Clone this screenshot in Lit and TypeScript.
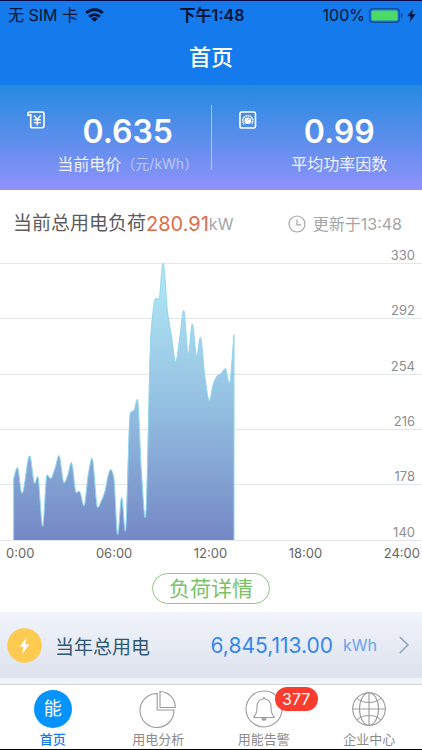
import { LitElement, html, svg, css } from "lit";
import { customElement, property } from "lit/decorators.js";
import { classMap } from "lit/directives/class-map.js";

// Load curve in plot units: x runs 0-1266 across the day, y runs 0 (330 kW) to 829 (140 kW).
const LOAD: [number, number][] = [
  [41, 645], [52, 612], [66, 690], [89, 577], [104, 660], [113, 639], [128, 788],
  [141, 634], [152, 645], [165, 615], [177, 576], [192, 658], [203, 636], [214, 597],
  [229, 687], [238, 683], [252, 727], [265, 632], [276, 584], [293, 732], [303, 714],
  [315, 683], [324, 638], [332, 618], [341, 640], [353, 813], [365, 702], [376, 803],
  [391, 448], [402, 441], [412, 408], [424, 620], [436, 763], [453, 210], [467, 106],
  [477, 108], [489, 0], [503, 150], [515, 222], [527, 296], [539, 226], [551, 142],
  [565, 273], [577, 182], [590, 280], [601, 222], [615, 343], [628, 412], [640, 362],
  [652, 337], [663, 331], [676, 316], [688, 361], [702, 215],
];
const PLOT_W = 1266;
const PLOT_H = 829;

/** Monotone cubic path, so peaks never overshoot the readings. */
function smoothPath(p: [number, number][]): string {
  const n = p.length;
  const slope = p.slice(1).map((q, i) => (q[1] - p[i][1]) / (q[0] - p[i][0]));
  const tan = p.map((_, i) => {
    if (i === 0) return slope[0];
    if (i === n - 1) return slope[n - 2];
    const a = slope[i - 1];
    const b = slope[i];
    return a * b <= 0 ? 0 : (2 * a * b) / (a + b);
  });
  let d = `M${p[0][0]} ${p[0][1]}`;
  for (let i = 1; i < n; i++) {
    const h = (p[i][0] - p[i - 1][0]) / 3;
    d += `C${p[i - 1][0] + h} ${(p[i - 1][1] + tan[i - 1] * h).toFixed(1)} ${p[i][0] - h} ${(p[i][1] - tan[i] * h).toFixed(1)} ${p[i][0]} ${p[i][1]}`;
  }
  return d;
}

const base = css`
  :host {
    display: block;
    font-family: Inter, "Noto Sans CJK SC", sans-serif;
  }
  * {
    box-sizing: border-box;
  }
  svg {
    display: block;
  }
`;

@customElement("status-bar")
export class StatusBar extends LitElement {
  static styles = [
    base,
    css`
      .bar {
        display: grid;
        grid-template-columns: 1fr auto 1fr;
        align-items: center;
        height: 28px;
        padding: 0 6px 0 8px;
        font-size: 16px;
        line-height: 24px;
        color: #071433;
      }
      .side {
        display: flex;
        align-items: center;
        gap: 7px;
      }
      .end {
        justify-content: flex-end;
        gap: 4px;
      }
      .time {
        font-weight: 600;
      }
    `,
  ];
  render() {
    return html`<div class="bar">
      <div class="side">
        <span>无 SIM 卡</span>
        <svg width="19" height="14" viewBox="0 0 19 14" fill="none" stroke="#071433" stroke-width="2.9">
          <path d="M1.200 5a12 12 0 0 1 16.600 0" />
          <path d="M4.200 8.700a7.700 7.700 0 0 1 10.600 0" />
          <path d="M9.500 13.800 6.100 10.700a4.900 4.900 0 0 1 6.800 0z" fill="#071433" stroke="none" />
        </svg>
      </div>
      <span class="time">下午1:48</span>
      <div class="side end">
        <span>100%</span>
        <svg width="34" height="15" viewBox="0 0 34 15">
          <rect x="0.700" y="0.700" width="29.600" height="13.600" rx="3" fill="none" stroke="#134c9c" stroke-width="1.300" />
          <rect x="2.400" y="2.400" width="26.200" height="10.200" rx="1.600" fill="#4cd964" />
          <path d="M31.800 5v5c1.300-.5 1.900-1.400 1.900-2.500s-.6-2-1.900-2.500z" fill="#134c9c" />
        </svg>
        <svg width="9" height="13" viewBox="0 0 9 13"><path d="M6 0 .4 7.300h3.400L2.600 13l6-7.700H5z" fill="#071433" /></svg>
      </div>
    </div>`;
  }
}

@customElement("metric-panel")
export class MetricPanel extends LitElement {
  @property() value = "";
  @property() label = "";
  @property() unit = "";
  @property() icon = "";
  static styles = [
    base,
    css`
      .panel {
        display: flex;
        align-items: flex-start;
        height: 105px;
        padding: 26px 0 0 27px;
        color: #fff;
      }
      .body {
        flex: 1;
        display: flex;
        flex-direction: column;
        align-items: center;
        padding-top: 1px;
        white-space: nowrap;
      }
      .value {
        font-size: 32px;
        line-height: 40px;
        font-weight: 600;
      }
      .caption {
        display: flex;
        font-size: 16px;
        line-height: 24px;
        color: #eef2ff;
      }
      .unit {
        font-size: 14px;
        color: #bcc9f8;
      }
    `,
  ];
  private glyph() {
    return this.icon === "bill"
      ? svg`<path d="M3.700 5V15.300a1.500 1.500 0 0 0 1.500 1.500h10.300a1.500 1.500 0 0 0 1.500-1.500V2.500a1.500 1.500 0 0 0-1.500-1.500H2.500A1.700 1.700 0 0 0 .9 2.700V4.200h2.800V2.800" stroke-width="1.600" />
          <path d="M7 4.500l3.300 4 3.300-4M10.300 8.500V14.500M6.800 8.800h7M6.800 11.600h7" stroke-width="1.400" />`
      : svg`<rect x="1" y="1" width="15.500" height="16" rx="1.800" stroke-width="1.600" />
          <circle cx="8.800" cy="9.800" r="3.300" fill="#fff" stroke="none" />
          <path d="M5.300 13.200a5 5 0 1 1 7 0" stroke-width="1.700" stroke-dasharray="1.300 .6" />
          <path d="M8.800 9.500 10.600 7.600" stroke="#4a8be6" stroke-width=".8" />`;
  }
  render() {
    return html`<div class="panel">
      <svg width="18" height="18" viewBox="0 0 18 18" fill="none" stroke="#fff">${this.glyph()}</svg>
      <div class="body">
        <span class="value">${this.value}</span>
        <span class="caption">${this.label}${this.unit ? html`<span class="unit">${this.unit}</span>` : ""}</span>
      </div>
    </div>`;
  }
}

@customElement("load-chart")
export class LoadChart extends LitElement {
  static styles = [
    base,
    css`
      .plot {
        display: grid;
        padding-top: 1px;
      }
      .scale,
      .curve {
        grid-area: 1 / 1;
      }
      .scale {
        display: grid;
        grid-template-rows: 55px 56px 55px 55px 56px 20px;
        margin: -19px 0 0;
        padding: 0;
        list-style: none;
      }
      .tick {
        display: flex;
        align-items: flex-end;
        justify-content: flex-end;
        height: 20px;
        padding-right: 7px;
        border-bottom: 1px solid #e4e7ea;
        font-size: 13px;
        line-height: 16px;
        color: #8e8e8e;
      }
      .curve {
        width: 100%;
        height: 277px;
        overflow: visible;
      }
      .hours {
        display: flex;
        justify-content: space-between;
        padding: 3px 2px 1px 6px;
        font-size: 13px;
        line-height: 18px;
        color: #666;
      }
    `,
  ];
  render() {
    const line = smoothPath(LOAD);
    const first = LOAD[0][0];
    return html`<div class="plot">
        <ul class="scale">
          ${[330, 292, 254, 216, 178, 140].map((v) => html`<li class="tick">${v}</li>`)}
        </ul>
        <svg class="curve" viewBox="0 0 ${PLOT_W} ${PLOT_H}" preserveAspectRatio="none" role="img" aria-label="当前总用电负荷">
          <defs>
            <linearGradient id="fill" x1="0" y1="0" x2="0" y2="1">
              <stop offset="0" stop-color="#b0e9f6" stop-opacity=".96" />
              <stop offset=".5" stop-color="#91bfe1" stop-opacity=".97" />
              <stop offset="1" stop-color="#7185c4" stop-opacity=".98" />
            </linearGradient>
          </defs>
          <path d="${line}V${PLOT_H}H${first}Z" fill="url(#fill)" />
          <path d="M${first} ${PLOT_H}V${LOAD[0][1]}${line.replace(/^M\S+ [\d.]+/, "")}V${PLOT_H}" fill="none" stroke="#8fd6ee" stroke-width="1" vector-effect="non-scaling-stroke" />
        </svg>
      </div>
      <div class="hours">
        ${["0:00", "06:00", "12:00", "18:00", "24:00"].map((t) => html`<span>${t}</span>`)}
      </div>`;
  }
}

@customElement("tab-bar")
export class TabBar extends LitElement {
  static styles = [
    base,
    css`
      .tabs {
        display: grid;
        grid-template-columns: repeat(4, 1fr);
        height: 66px;
        background: #fff;
        border-top: 1px solid #d4d6da;
        border-bottom: 1px solid #000;
      }
      .tab {
        display: flex;
        flex-direction: column;
        align-items: center;
        gap: 2px;
        padding-top: 5px;
        color: #8b8b8b;
        font-size: 13px;
        line-height: 18px;
        text-decoration: none;
      }
      .active {
        color: #1479ea;
        font-weight: 500;
      }
      .icon {
        position: relative;
        width: 38px;
        height: 38px;
      }
      .logo {
        display: flex;
        align-items: center;
        justify-content: center;
        width: 38px;
        height: 38px;
        border-radius: 50%;
        background: #0594ff;
        color: #fff;
        font-size: 18px;
        font-weight: 400;
      }
      .badge {
        position: absolute;
        left: 30px;
        top: -3px;
        min-width: 43px;
        border-radius: 12px;
        background: #fd3c30;
        color: #fff;
        font-size: 16px;
        line-height: 24px;
        text-align: center;
      }
    `,
  ];
  private readonly pie = svg`<path d="M18.200 3.500A17 17 0 1 0 35 20H18.200z" /><path d="M21 1.500V17.500h15.300C36.300 8.500 29.500 1.800 21 1.500z" />`;
  private readonly bell = svg`<circle cx="19" cy="19" r="18" />
    <path d="M9 26.500c3-2.500 3-5.500 3-9.500 0-5 2.800-7.500 6-8 .2-1.800 1.800-1.800 2 0 3.200.5 6 3 6 8 0 4 0 7 3 9.500.5.500.2 1-.5 1h-19c-.7 0-1-.5-.5-1z" />
    <path d="M17 28.700h4a2 1.600 0 0 1-4 0z" fill="#9a9a9a" />`;
  private readonly globe = svg`<circle cx="19" cy="19" r="16.300" /><ellipse cx="19" cy="19" rx="9.500" ry="16.300" />
    <path d="M19 2.700v32.600M2.700 19h32.600M7 8q4 4.500 12 4.500T31 8M7 30q4-4.500 12-4.500T31 30" />`;
  private draw(shape: unknown) {
    return html`<svg width="38" height="38" viewBox="0 0 38 38" fill="none" stroke="#9a9a9a" stroke-width="1.100">${shape}</svg>`;
  }
  render() {
    const tabs = [
      { name: "首页", icon: html`<span class="logo">能</span>`, active: true, count: 0 },
      { name: "用电分析", icon: this.draw(this.pie), active: false, count: 0 },
      { name: "用能告警", icon: this.draw(this.bell), active: false, count: 377 },
      { name: "企业中心", icon: this.draw(this.globe), active: false, count: 0 },
    ];
    return html`<nav class="tabs">
      ${tabs.map(
        (t) => html`<a href="#" class=${classMap({ tab: true, active: t.active })}>
          <span class="icon">${t.icon}${t.count ? html`<span class="badge">${t.count}</span>` : ""}</span>
          <span>${t.name}</span>
        </a>`
      )}
    </nav>`;
  }
}

@customElement("app-root")
export class AppRoot extends LitElement {
  static styles = [
    base,
    css`
      :host {
        display: flex;
        flex-direction: column;
        min-height: 100vh;
        background: #fff;
      }
      .top {
        background: #157aeb;
        border-top: 1px solid #0a0a48;
      }
      .title {
        margin: 0;
        height: 56px;
        font-size: 22px;
        line-height: 56px;
        font-weight: 500;
        text-align: center;
        color: #fff;
      }
      .metrics {
        display: grid;
        grid-template-columns: 1fr 1px 1fr;
        background: linear-gradient(#258adf, #8f92f9);
      }
      .rule {
        margin: 20px 0;
        background: #ffffff80;
      }
      .heading {
        display: flex;
        align-items: center;
        justify-content: space-between;
        height: 72px;
        padding: 0 20px 4px 13px;
        white-space: nowrap;
      }
      .load {
        display: flex;
        align-items: center;
        margin: 0;
        font-size: 19px;
        line-height: 28px;
        font-weight: 400;
        color: #5c5c5c;
      }
      .amount {
        font-size: 20px;
        color: #dc6e48;
      }
      .kw {
        font-size: 16px;
        color: #a5a5a5;
      }
      .updated {
        display: flex;
        align-items: center;
        gap: 7px;
        font-size: 16px;
        line-height: 24px;
        color: #a5a5a5;
      }
      .detail {
        display: block;
        margin: 10px auto 8px;
        width: 118px;
        height: 31px;
        padding: 0;
        border: 1px solid #8bcb7c;
        border-radius: 16px;
        background: #fff;
        color: #79c267;
        font: inherit;
        font-size: 21px;
        line-height: 28px;
      }
      .total {
        display: flex;
        align-items: center;
        height: 66px;
        padding: 0 13px 0 7px;
        background: linear-gradient(#f1f4fa, #dde2ee);
        text-decoration: none;
        white-space: nowrap;
      }
      .name {
        flex: 1;
        padding-left: 13px;
        font-size: 19px;
        color: #2f5773;
      }
      .sum {
        font-size: 21px;
        color: #3587ee;
      }
      .kwh {
        padding: 0 22px 0 10px;
        font-size: 16px;
        color: #6ba0ec;
      }
      .next {
        flex: 1;
        min-height: 6px;
        background: #eff3fa;
      }
    `,
  ];
  render() {
    return html`
      <header class="top">
        <status-bar></status-bar>
        <h1 class="title">首页</h1>
      </header>
      <section class="metrics">
        <metric-panel icon="bill" value="0.635" label="当前电价" unit="（元/kWh）"></metric-panel>
        <div class="rule"></div>
        <metric-panel icon="dial" value="0.99" label="平均功率因数"></metric-panel>
      </section>
      <section>
        <div class="heading">
          <h2 class="load">当前总用电负荷<span class="amount">280.91</span><span class="kw">kW</span></h2>
          <div class="updated">
            <svg width="18" height="18" viewBox="0 0 18 18" fill="none" stroke="#a5a5a5" stroke-width="1.200">
              <circle cx="9" cy="9" r="8" />
              <path d="M9 4.500V9.800h4" />
            </svg>
            <span>更新于13:48</span>
          </div>
        </div>
        <load-chart></load-chart>
        <button class="detail" type="button">负荷详情</button>
      </section>
      <a class="total" href="#">
        <svg width="35" height="35" viewBox="0 0 35 35">
          <circle cx="17.500" cy="17.500" r="17.300" fill="#fecb50" />
          <path d="M19.800 9.500 12.300 18.700h4.300l-1.600 7.300 7.600-9.700h-4.400z" fill="#fff" />
        </svg>
        <span class="name">当年总用电</span>
        <span class="sum">6,845,113.00</span>
        <span class="kwh">kWh</span>
        <svg width="10" height="18" viewBox="0 0 10 18" fill="none" stroke="#8aa2b8" stroke-width="1.500"><path d="m.8 1 8.200 8-8.200 8" /></svg>
      </a>
      <div class="next"></div>
      <tab-bar></tab-bar>
    `;
  }
}
